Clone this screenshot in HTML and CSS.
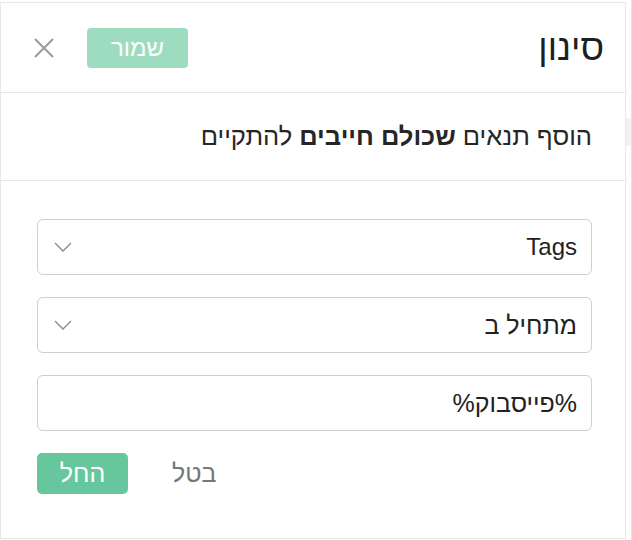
FILE: index.html
```html
<!DOCTYPE html>
<html lang="he" dir="rtl">
<head>
    <meta charset="UTF-8">
    <title>סינון</title>
    <link rel="stylesheet" href="styles.css">
</head>
<body>
    <div class="page">
        <div class="backdrop">
            <div class="backdrop-band"></div>
        </div>
        <div class="panel">
            <div class="header">
                <div class="title">סינון</div>
                <div class="actions">
                    <button class="save">שמור</button>
                    <span class="close">
                        <svg width="22" height="22" viewBox="0 0 22 22"><path d="M2 2 L20 20 M20 2 L2 20" stroke="#9a9a9a" stroke-width="2" fill="none"/></svg>
                    </span>
                </div>
            </div>
            <div class="hint">הוסף תנאים <b>שכולם חייבים</b> להתקיים</div>
            <div class="body">
                <div class="field select">
                    <span class="latin">Tags</span>
                    <svg class="chev" width="18" height="10" viewBox="0 0 18 10"><path d="M1 1 L9 9 L17 1" stroke="#888" stroke-width="1.3" fill="none"/></svg>
                </div>
                <div class="field select">
                    <span>מתחיל ב</span>
                    <svg class="chev" width="18" height="10" viewBox="0 0 18 10"><path d="M1 1 L9 9 L17 1" stroke="#888" stroke-width="1.3" fill="none"/></svg>
                </div>
                <div class="field">
                    <span>%פייסבוק%</span>
                </div>
                <div class="footer">
                    <button class="cancel">בטל</button>
                    <button class="apply">החל</button>
                </div>
            </div>
        </div>
    </div>
</body>
</html>
```

FILE: styles.css
```css
body {
    margin: 0;
    background-color: #fff;
    font-family: "Liberation Sans", Arial, sans-serif;
    color: #222;
}
.page {
    display: flex;
    height: 540px;
    width: 632px;
    overflow: hidden;
}
.backdrop {
    width: 5px;
    border-right: 1px solid #e4e4e4;
    padding-top: 118px;
}
.backdrop-band {
    height: 28px;
    background-color: #f2f2f2;
}
.panel {
    width: 627px;
    height: 537px;
    margin-top: 2px;
    border: 1px solid #e8e8e8;
    background-color: #fff;
    box-sizing: border-box;
}
.header {
    display: flex;
    justify-content: space-between;
    align-items: center;
    height: 89px;
    padding: 0 21px 0 32px;
    border-bottom: 1px solid #e6e6e6;
}
.title {
    font-size: 36px;
    color: #1e1e1e;
}
.actions {
    display: flex;
    align-items: center;
    gap: 32px;
}
.save {
    width: 101px;
    height: 40px;
    border: none;
    border-radius: 4px;
    background-color: #9edcbf;
    color: #fff;
    font-family: inherit;
    font-size: 24px;
}
.close {
    display: flex;
}
.hint {
    height: 87px;
    display: flex;
    align-items: center;
    padding: 0 33px;
    font-size: 25.5px;
    color: #262626;
    border-bottom: 1px solid #e6e6e6;
    white-space: pre;
}
.body {
    padding: 38px 33px 0 36px;
    display: flex;
    flex-direction: column;
    gap: 22px;
}
.field {
    display: flex;
    justify-content: space-between;
    align-items: center;
    height: 56px;
    padding: 0 14px 0 14px;
    border: 1px solid #cfcfcf;
    border-radius: 6px;
    font-size: 25px;
    color: #222;
    box-sizing: border-box;
}
.latin {
    font-size: 24px;
}
.chev {
    margin-left: 2px;
}
.footer {
    display: flex;
    justify-content: flex-end;
    align-items: center;
    gap: 44px;
}
.cancel {
    background: none;
    border: none;
    padding: 0;
    font-family: inherit;
    font-size: 25px;
    color: #777;
}
.apply {
    width: 91px;
    height: 41px;
    border: none;
    border-radius: 5px;
    background-color: #66c79c;
    color: #fff;
    font-family: inherit;
    font-size: 25px;
}
```
